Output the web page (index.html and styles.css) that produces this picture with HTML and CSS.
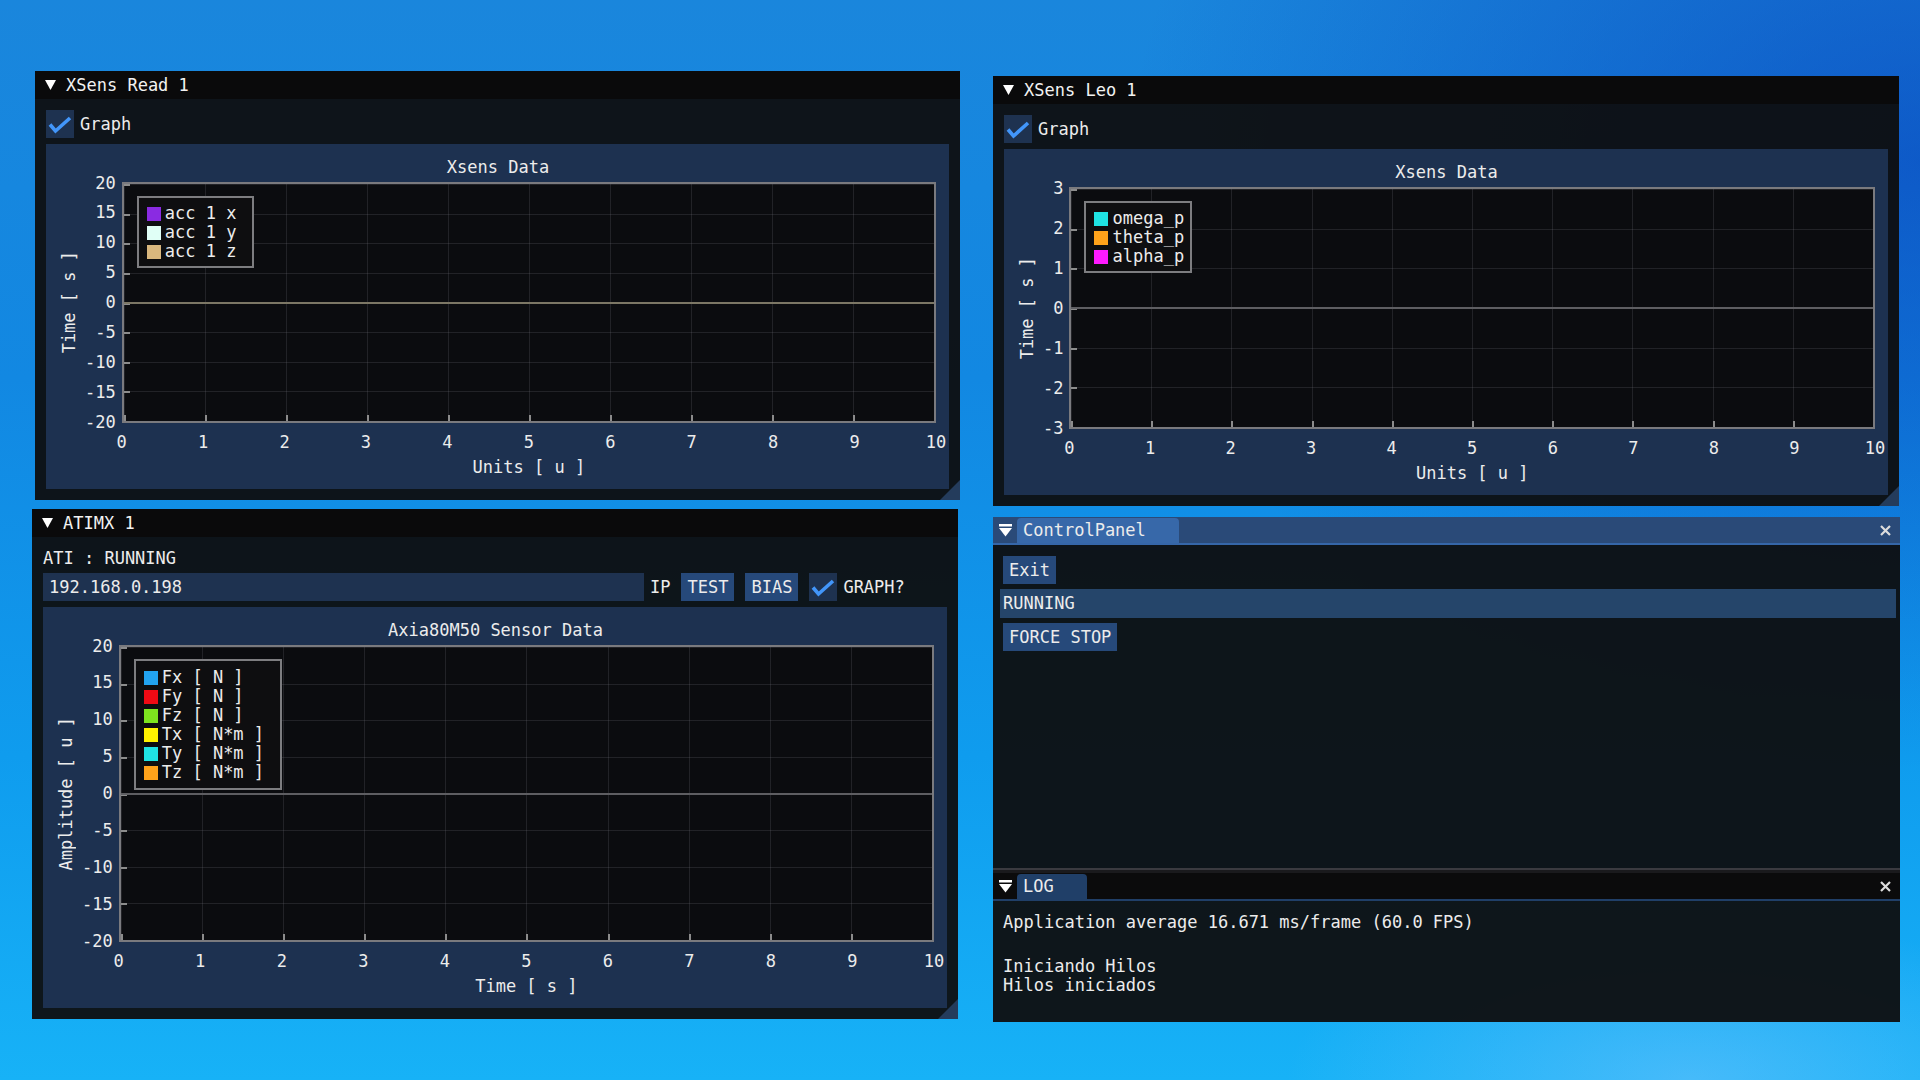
FILE: index.html
```html
<!DOCTYPE html>
<html lang="en">
<head>
<meta charset="utf-8">
<title>ImGui Sensors</title>
<link rel="stylesheet" href="styles.css">
</head>
<body>
<div class="desktop">

  <!-- XSens Read 1 -->
  <section class="win win-read">
    <header class="titlebar">
      <svg class="tri" viewBox="0 0 11 10"><polygon points="0,0 11,0 5.5,10" fill="#fff"/></svg>
      <span>XSens Read 1</span>
    </header>
    <div class="body">
      <div class="check-row">
        <span class="checkbox"><svg viewBox="0 0 28 28"><polyline points="4,14.5 9.5,21 24,8" fill="none" stroke="#4296fa" stroke-width="3.6"/></svg></span>
        <span>Graph</span>
      </div>
      <div class="plot">
        <div class="plot-title">Xsens Data</div>
        <div class="ytitle">Time [ s ]</div>
        <div class="yticks"><span>20</span><span>15</span><span>10</span><span>5</span><span>0</span><span>-5</span><span>-10</span><span>-15</span><span>-20</span></div>
        <div class="area div8 zero-tan">
          <ul class="legend legend-wide">
            <li><i class="sw c-purple"></i>acc 1 x</li>
            <li><i class="sw c-aqua"></i>acc 1 y</li>
            <li><i class="sw c-tan"></i>acc 1 z</li>
          </ul>
        </div>
        <div class="xticks"><span>0</span><span>1</span><span>2</span><span>3</span><span>4</span><span>5</span><span>6</span><span>7</span><span>8</span><span>9</span><span>10</span></div>
        <div class="xtitle">Units [ u ]</div>
      </div>
    </div>
    <div class="grip"></div>
  </section>

  <!-- XSens Leo 1 -->
  <section class="win win-leo">
    <header class="titlebar">
      <svg class="tri" viewBox="0 0 11 10"><polygon points="0,0 11,0 5.5,10" fill="#fff"/></svg>
      <span>XSens Leo 1</span>
    </header>
    <div class="body">
      <div class="check-row">
        <span class="checkbox"><svg viewBox="0 0 28 28"><polyline points="4,14.5 9.5,21 24,8" fill="none" stroke="#4296fa" stroke-width="3.6"/></svg></span>
        <span>Graph</span>
      </div>
      <div class="plot">
        <div class="plot-title">Xsens Data</div>
        <div class="ytitle">Time [ s ]</div>
        <div class="yticks"><span>3</span><span>2</span><span>1</span><span>0</span><span>-1</span><span>-2</span><span>-3</span></div>
        <div class="area div6 zero-gray">
          <ul class="legend legend-narrow">
            <li><i class="sw c-cyan"></i>omega_p</li>
            <li><i class="sw c-orange"></i>theta_p</li>
            <li><i class="sw c-magenta"></i>alpha_p</li>
          </ul>
        </div>
        <div class="xticks"><span>0</span><span>1</span><span>2</span><span>3</span><span>4</span><span>5</span><span>6</span><span>7</span><span>8</span><span>9</span><span>10</span></div>
        <div class="xtitle">Units [ u ]</div>
      </div>
    </div>
    <div class="grip"></div>
  </section>

  <!-- ATIMX 1 -->
  <section class="win win-ati">
    <header class="titlebar">
      <svg class="tri" viewBox="0 0 11 10"><polygon points="0,0 11,0 5.5,10" fill="#fff"/></svg>
      <span>ATIMX 1</span>
    </header>
    <div class="body">
      <div class="text-line">ATI : RUNNING</div>
      <div class="ctrl-row">
        <div class="input">192.168.0.198</div>
        <span class="input-label">IP</span>
        <span class="btn">TEST</span>
        <span class="btn">BIAS</span>
        <div class="check-row">
          <span class="checkbox"><svg viewBox="0 0 28 28"><polyline points="4,14.5 9.5,21 24,8" fill="none" stroke="#4296fa" stroke-width="3.6"/></svg></span>
          <span>GRAPH?</span>
        </div>
      </div>
      <div class="plot">
        <div class="plot-title">Axia80M50 Sensor Data</div>
        <div class="ytitle">Amplitude [ u ]</div>
        <div class="yticks"><span>20</span><span>15</span><span>10</span><span>5</span><span>0</span><span>-5</span><span>-10</span><span>-15</span><span>-20</span></div>
        <div class="area div8 zero-gray">
          <ul class="legend legend-wide legend-six">
            <li><i class="sw c-blue"></i>Fx [ N ]</li>
            <li><i class="sw c-red"></i>Fy [ N ]</li>
            <li><i class="sw c-green"></i>Fz [ N ]</li>
            <li><i class="sw c-yellow"></i>Tx [ N*m ]</li>
            <li><i class="sw c-cyan"></i>Ty [ N*m ]</li>
            <li><i class="sw c-orange"></i>Tz [ N*m ]</li>
          </ul>
        </div>
        <div class="xticks"><span>0</span><span>1</span><span>2</span><span>3</span><span>4</span><span>5</span><span>6</span><span>7</span><span>8</span><span>9</span><span>10</span></div>
        <div class="xtitle">Time [ s ]</div>
      </div>
    </div>
    <div class="grip"></div>
  </section>

  <!-- Docked ControlPanel + LOG -->
  <section class="win dock">
    <div class="pane pane-cp">
      <header class="dock-bar dock-bar-active">
        <svg class="dock-menu" viewBox="0 0 13 13"><rect x="0" y="0" width="13" height="2.5" fill="#fff"/><polygon points="0,4 13,4 6.5,12.5" fill="#fff"/></svg>
        <span class="tab tab-active">ControlPanel</span>
        <svg class="close" viewBox="0 0 11 11"><path d="M1 1 L10 10 M10 1 L1 10" stroke="#dcdcdc" stroke-width="2.2" fill="none"/></svg>
      </header>
      <div class="cp-body">
        <span class="btn">Exit</span>
        <div class="selectable">RUNNING</div>
        <span class="btn">FORCE STOP</span>
      </div>
    </div>
    <div class="splitter"></div>
    <div class="pane pane-log">
      <header class="dock-bar dock-bar-inactive">
        <svg class="dock-menu" viewBox="0 0 13 13"><rect x="0" y="0" width="13" height="2.5" fill="#fff"/><polygon points="0,4 13,4 6.5,12.5" fill="#fff"/></svg>
        <span class="tab tab-inactive">LOG</span>
        <svg class="close" viewBox="0 0 11 11"><path d="M1 1 L10 10 M10 1 L1 10" stroke="#dcdcdc" stroke-width="2.2" fill="none"/></svg>
      </header>
      <div class="log-body">
        <div>Application average 16.671 ms/frame (60.0 FPS)</div>
        <div class="log-text">
          <div class="log-line"></div>
          <div class="log-line">Iniciando Hilos</div>
          <div class="log-line">Hilos iniciados</div>
        </div>
      </div>
    </div>
  </section>

</div>
</body>
</html>
```
FILE: styles.css
```css
* { box-sizing: border-box; margin: 0; padding: 0; }

html, body {
  width: 1920px;
  height: 1080px;
  overflow: hidden;
}

body {
  font-family: "DejaVu Sans Mono", "Liberation Mono", monospace;
  font-size: 17px;
  line-height: 19px;
  color: #ececec;
  background: #1584e0;
}

.desktop {
  position: relative;
  width: 1920px;
  height: 1080px;
  background:
    radial-gradient(ellipse 30% 22% at 88% 100%, rgba(140, 200, 255, 0.4), transparent 70%),
    radial-gradient(ellipse 55% 75% at 100% 15%, rgba(8, 60, 185, 0.6), transparent 75%),
    linear-gradient(180deg, #1a86dc 0%, #1288e2 35%, #0f9cee 70%, #17b2f7 100%);
}

/* ---------- ImGui window ---------- */
.win {
  position: absolute;
  display: flex;
  flex-direction: column;
  background: rgba(14, 14, 15, 0.95);
}

.win-read { left: 35px;  top: 71px;  width: 925px; height: 429px; }
.win-leo  { left: 993px; top: 76px;  width: 906px; height: 430px; }
.win-ati  { left: 32px;  top: 509px; width: 926px; height: 510px; }
.dock     { left: 993px; top: 517px; width: 907px; height: 505px; }

.titlebar {
  flex: none;
  height: 28px;
  display: flex;
  align-items: center;
  gap: 10px;
  padding-left: 10px;
  background: #0a0a0b;
  color: #f2f2f2;
}

.tri { width: 11px; height: 10px; }

.body {
  flex: 1;
  min-height: 0;
  display: flex;
  flex-direction: column;
  gap: 6px;
  padding: 11px;
}

.text-line { height: 19px; margin-top: 1px; margin-bottom: -1px; }

.check-row {
  flex: none;
  height: 28px;
  display: flex;
  align-items: center;
  gap: 6px;
}

.checkbox {
  width: 28px;
  height: 28px;
  background: #1e3250;
  display: flex;
}
.checkbox svg { width: 28px; height: 28px; }

/* ---------- controls ---------- */
.ctrl-row {
  flex: none;
  height: 28px;
  display: flex;
  align-items: center;
  gap: 11px;
}

.input {
  width: 601px;
  height: 28px;
  background: #1e3250;
  padding-left: 6px;
  display: flex;
  align-items: center;
}

.input-label { margin-left: -5px; }

.btn {
  height: 28px;
  padding: 0 6px;
  background: #26497a;
  display: inline-flex;
  align-items: center;
  white-space: pre;
}

/* ---------- plot ---------- */
.plot {
  flex: 1;
  min-height: 0;
  background: #1d3150;
  display: grid;
  grid-template-columns: 19px auto 1fr;
  grid-template-rows: auto 1fr auto auto;
  column-gap: 6px;
  padding: 14px 13px 12px 14px;
}

.plot-title {
  grid-column: 1 / -1;
  grid-row: 1;
  text-align: center;
  margin-bottom: 5px;
}

.ytitle {
  grid-column: 1;
  grid-row: 2;
  writing-mode: vertical-rl;
  transform: rotate(180deg);
  align-self: center;
  justify-self: center;
  white-space: pre;
}

.yticks {
  grid-column: 2;
  grid-row: 2;
  display: flex;
  flex-direction: column;
  justify-content: space-between;
  padding: 1px 0;
}

.yticks span {
  height: 0;
  display: flex;
  align-items: center;
  justify-content: flex-end;
  white-space: nowrap;
}

.area {
  grid-column: 3;
  grid-row: 2;
  position: relative;
  border: 2px solid #7a7a7e;
  background-color: #0b0c0f;
  background-repeat: no-repeat;
  background-position: left bottom, left top, left top, left top;
}

.div8 {
  background-image:
    repeating-linear-gradient(to right, #8c8c8c 0 2px, transparent 2px 10%),
    repeating-linear-gradient(to bottom, #8c8c8c 0 2px, transparent 2px 12.5%),
    repeating-linear-gradient(to right, rgba(125, 125, 135, 0.2) 0 1px, transparent 1px 10%),
    repeating-linear-gradient(to bottom, rgba(125, 125, 135, 0.2) 0 1px, transparent 1px 12.5%);
  background-size: 100% 6px, 6px 100%, 100% 100%, 100% 100%;
}

.div6 {
  background-image:
    repeating-linear-gradient(to right, #8c8c8c 0 2px, transparent 2px 10%),
    repeating-linear-gradient(to bottom, #8c8c8c 0 2px, transparent 2px 16.6667%),
    repeating-linear-gradient(to right, rgba(125, 125, 135, 0.2) 0 1px, transparent 1px 10%),
    repeating-linear-gradient(to bottom, rgba(125, 125, 135, 0.2) 0 1px, transparent 1px 16.6667%);
  background-size: 100% 6px, 6px 100%, 100% 100%, 100% 100%;
}

/* plotted series (all zero) */
.area::after {
  content: "";
  position: absolute;
  left: 0;
  right: 0;
  top: 50%;
  height: 2px;
  margin-top: -1px;
}
.zero-tan::after  { background: #7c7765; }
.zero-gray::after { background: #5e5e62; }

.xticks {
  grid-column: 3;
  grid-row: 3;
  height: 19px;
  margin-top: 10px;
  display: flex;
  justify-content: space-between;
}

.xticks span {
  width: 0;
  display: flex;
  justify-content: center;
  white-space: nowrap;
}

.xtitle {
  grid-column: 3;
  grid-row: 4;
  margin-top: 6px;
  text-align: center;
  white-space: pre;
}

/* ---------- legend ---------- */
.legend {
  position: absolute;
  top: 12px;
  left: 13px;
  list-style: none;
  background: #0e0e10;
  border: 2px solid #7d7d80;
  padding: 6px 6px 5px 8px;
}
.legend-wide { padding-right: 16px; }
.legend-six { padding-top: 7px; padding-bottom: 6px; }
.legend-six li { height: 19.4px; }

.legend li {
  display: flex;
  align-items: center;
  gap: 4px;
  height: 19px;
  white-space: pre;
}

.sw {
  display: block;
  width: 14px;
  height: 14px;
}

.c-purple  { background: #8a2be2; }
.c-aqua    { background: #e0fff6; }
.c-tan     { background: #d9b77e; }
.c-cyan    { background: #1fe3e3; }
.c-orange  { background: #ffa21a; }
.c-magenta { background: #ff1aff; }
.c-blue    { background: #22a3f0; }
.c-red     { background: #f00a14; }
.c-green   { background: #7ee41e; }
.c-yellow  { background: #fff200; }

/* ---------- resize grip ---------- */
.grip {
  position: absolute;
  right: 0;
  bottom: 0;
  width: 20px;
  height: 20px;
  background: #243c5c;
  clip-path: polygon(100% 0, 100% 100%, 0 100%);
}

/* ---------- docked panes ---------- */
.dock { background: transparent; }

.pane {
  display: flex;
  flex-direction: column;
  background: rgba(14, 14, 15, 0.95);
}
.pane-cp { height: 351px; flex: none; }
.pane-log { flex: 1; min-height: 0; }

.splitter {
  flex: none;
  height: 5px;
  background: #1a1a1d;
  border-top: 2px solid #3a3a40;
}

.dock-bar {
  flex: none;
  height: 28px;
  display: flex;
  align-items: stretch;
  padding-left: 6px;
  gap: 5px;
}
.dock-bar-active   { background: #2a4a78; border-bottom: 2px solid #3566a8; }
.dock-bar-inactive { background: #0b0b0c; border-bottom: 2px solid #203f68; }

.dock-menu {
  width: 13px;
  height: 13px;
  align-self: center;
}

.tab {
  display: flex;
  align-items: center;
  padding: 0 33px 0 6px;
  border-radius: 4px 4px 0 0;
  margin-top: 1px;
}
.tab-active   { background: #3768a9; }
.tab-inactive { background: #203f68; }

.close {
  width: 11px;
  height: 11px;
  align-self: center;
  margin-left: auto;
  margin-right: 9px;
}

.cp-body {
  display: flex;
  flex-direction: column;
  align-items: flex-start;
  gap: 5px;
  padding: 11px 4px 11px 10px;
}

.selectable {
  align-self: stretch;
  height: 29px;
  margin-left: -3px;
  padding-left: 3px;
  background: #25456a;
  display: flex;
  align-items: center;
}

.log-body {
  display: flex;
  flex-direction: column;
  gap: 6px;
  padding: 12px 10px;
}

.log-line {
  height: 19px;
  white-space: pre;
}
```
